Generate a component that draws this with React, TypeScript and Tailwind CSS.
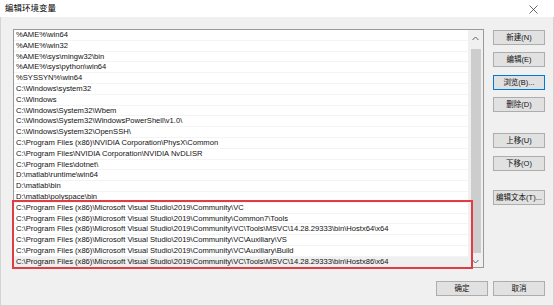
import React from "react";

const paths = [
  "%AME%\\win64",
  "%AME%\\win32",
  "%AME%\\sys\\mingw32\\bin",
  "%AME%\\sys\\python\\win64",
  "%SYSSYN%\\win64",
  "C:\\Windows\\system32",
  "C:\\Windows",
  "C:\\Windows\\System32\\Wbem",
  "C:\\Windows\\System32\\WindowsPowerShell\\v1.0\\",
  "C:\\Windows\\System32\\OpenSSH\\",
  "C:\\Program Files (x86)\\NVIDIA Corporation\\PhysX\\Common",
  "C:\\Program Files\\NVIDIA Corporation\\NVIDIA NvDLISR",
  "C:\\Program Files\\dotnet\\",
  "D:\\matlab\\runtime\\win64",
  "D:\\matlab\\bin",
  "D:\\matlab\\polyspace\\bin",
  "C:\\Program Files (x86)\\Microsoft Visual Studio\\2019\\Community\\VC",
  "C:\\Program Files (x86)\\Microsoft Visual Studio\\2019\\Community\\Common7\\Tools",
  "C:\\Program Files (x86)\\Microsoft Visual Studio\\2019\\Community\\VC\\Tools\\MSVC\\14.28.29333\\bin\\Hostx64\\x64",
  "C:\\Program Files (x86)\\Microsoft Visual Studio\\2019\\Community\\VC\\Auxiliary\\VS",
  "C:\\Program Files (x86)\\Microsoft Visual Studio\\2019\\Community\\VC\\Auxiliary\\Build",
  "C:\\Program Files (x86)\\Microsoft Visual Studio\\2019\\Community\\VC\\Tools\\MSVC\\14.28.29333\\bin\\Hostx86\\x64",
];

function Btn({ label, className = "", focus = false }: { label: string; className?: string; focus?: boolean }) {
  return (
    <div
      className={`flex h-[15px] w-[52px] items-center justify-center border bg-[#e1e1e1] text-[7.5px] text-[#111] ${
        focus ? "border-[#0078d7]" : "border-[#adadad]"
      } ${className}`}
    >
      {label}
    </div>
  );
}

export default function App() {
  return (
    <div
      className="flex h-[306px] w-[554px] flex-col overflow-hidden bg-[#f0f0f0]"
      style={{ fontFamily: '"Liberation Sans", "Noto Sans CJK SC", sans-serif' }}
    >
      <div className="flex h-[17px] shrink-0 items-center justify-between bg-white pl-[5px] pr-[16px]">
        <span className="text-[8.5px] text-black">编辑环境变量</span>
        <svg width="9" height="9" viewBox="0 0 9 9" className="mt-[1px]">
          <path d="M0.5 0.5 L8.5 8.5 M8.5 0.5 L0.5 8.5" stroke="#444" strokeWidth="0.8" />
        </svg>
      </div>

      <div className="flex flex-1 flex-col border-x border-b border-[#d4d4d4] pl-[12px] pt-[12px]">
        <div className="flex">
          <div className="relative flex h-[239px] w-[471px] border border-[#999]">
            <div className="flex flex-1 flex-col overflow-hidden bg-white">
              {paths.map((p, i) => (
                <div
                  key={i}
                  className={`flex h-[10.8px] shrink-0 items-center whitespace-nowrap border-b border-[#f4f4f4] pl-[2px] text-[7.6px] leading-none text-[#111] ${
                    i === paths.length - 1 ? "bg-[#efefef]" : ""
                  }`}
                >
                  {p}
                </div>
              ))}
            </div>
            <div className="flex w-[15px] shrink-0 flex-col items-center bg-[#f0f0f0]">
              <div className="flex h-[17px] items-center justify-center">
                <svg width="7" height="5" viewBox="0 0 7 5">
                  <path d="M0.5 4 L3.5 1 L6.5 4" fill="none" stroke="#606060" strokeWidth="1" />
                </svg>
              </div>
              <div className="my-[2px] w-[10px] flex-1 bg-[#cdcdcd]" />
              <div className="flex h-[12px] items-center justify-center">
                <svg width="7" height="5" viewBox="0 0 7 5">
                  <path d="M0.5 1 L3.5 4 L6.5 1" fill="none" stroke="#606060" strokeWidth="1" />
                </svg>
              </div>
            </div>
            <div className="pointer-events-none absolute left-[-2px] top-[170px] h-[69px] w-[461px] border-2 border-[#e33b44]" />
          </div>

          <div className="ml-[9px] flex flex-col">
            <Btn label="新建(N)" className="mt-[1px]" />
            <Btn label="编辑(E)" className="mt-[7px]" />
            <Btn label="浏览(B)..." className="mt-[8px]" focus />
            <Btn label="删除(D)" className="mt-[7px]" />
            <Btn label="上移(U)" className="mt-[21px]" />
            <Btn label="下移(O)" className="mt-[8px]" />
            <Btn label="编辑文本(T)..." className="mt-[19px]" />
          </div>
        </div>

        <div className="mt-[13px] flex justify-end gap-[5px] pr-[8px]">
          <Btn label="确定" />
          <Btn label="取消" />
        </div>
      </div>
    </div>
  );
}
